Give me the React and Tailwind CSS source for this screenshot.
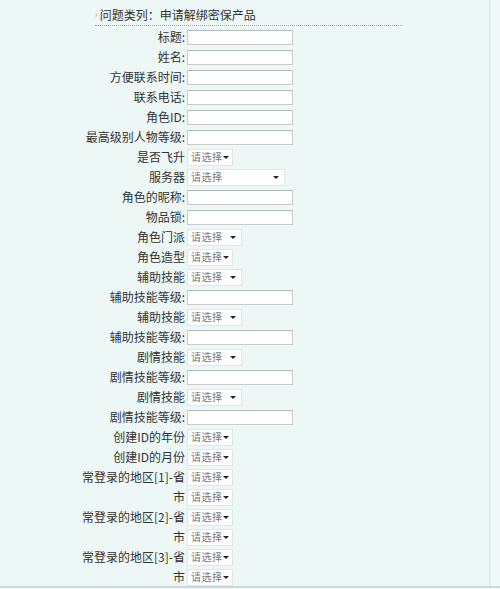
import React from 'react';

const F = { fontFamily: '"Noto Sans CJK SC", "Liberation Sans", sans-serif' };

// input | s (small select) | m (medium select) | l (server select)
const ROWS = [
  ['标题:', 'input'],
  ['姓名:', 'input'],
  ['方便联系时间:', 'input'],
  ['联系电话:', 'input'],
  ['角色ID:', 'input'],
  ['最高级别人物等级:', 'input'],
  ['是否飞升', 's'],
  ['服务器', 'l'],
  ['角色的昵称:', 'input'],
  ['物品锁:', 'input'],
  ['角色门派', 'm'],
  ['角色造型', 's'],
  ['辅助技能', 'm'],
  ['辅助技能等级:', 'input'],
  ['辅助技能', 'm'],
  ['辅助技能等级:', 'input'],
  ['剧情技能', 'm'],
  ['剧情技能等级:', 'input'],
  ['剧情技能', 'm'],
  ['剧情技能等级:', 'input'],
  ['创建ID的年份', 's'],
  ['创建ID的月份', 's'],
  ['常登录的地区[1]-省', 's'],
  ['市', 's'],
  ['常登录的地区[2]-省', 's'],
  ['市', 's'],
  ['常登录的地区[3]-省', 's'],
  ['市', 's'],
];

const SEL_W = { s: 'w-[46px]', m: 'w-[55px]', l: 'w-[98px]' };

function Field({ type }) {
  if (type === 'input') {
    return <div className="w-[106px] h-[15px] bg-white border border-[#c8cccc] border-t-[#b4b8b8]" />;
  }
  return (
    <div className={`${SEL_W[type]} h-[17px] bg-white border border-[#e0e5e5] flex items-center justify-between pl-[3px] pr-[5px] overflow-hidden`}>
      <span className="text-[10px] tracking-[0.5px] leading-none text-[#777] whitespace-nowrap">请选择</span>
      <span className="shrink-0 w-0 h-0 border-l-[3px] border-r-[3px] border-t-[3px] border-l-transparent border-r-transparent border-t-[#222]" />
    </div>
  );
}

export default function App() {
  return (
    <div style={F} className="w-[500px] h-[589px] bg-[#f1f9f8] overflow-hidden">
      <div className="w-[500px] h-[588px] border-b-2 border-b-[#c9d9dc]">
        <div className="w-[491px] h-full bg-[#edf8f6] border-r-2 border-[#dcefed]">
          <div className="pl-[95px] pt-[6px]">
            <div className="flex items-center h-[17px] text-[12px] text-[#333]">
              <span className="text-[#e0a040] text-[9px] mr-[2px]">›</span>
              <span>问题类列：申请解绑密保产品</span>
            </div>
            <div className="w-[308px] mt-[2px] border-t border-dotted border-[#9aaab0]" />
          </div>
          <div className="pt-[1px]">
            {ROWS.map(([label, type], i) => (
              <div key={i} className="flex items-center h-[20px]">
                <div className="w-[186px] text-right text-[12px] leading-none text-[#333] whitespace-nowrap pr-[1px]">{label}</div>
                <div className="pl-[1px]">
                  <Field type={type} />
                </div>
              </div>
            ))}
          </div>
        </div>
      </div>
    </div>
  );
}
